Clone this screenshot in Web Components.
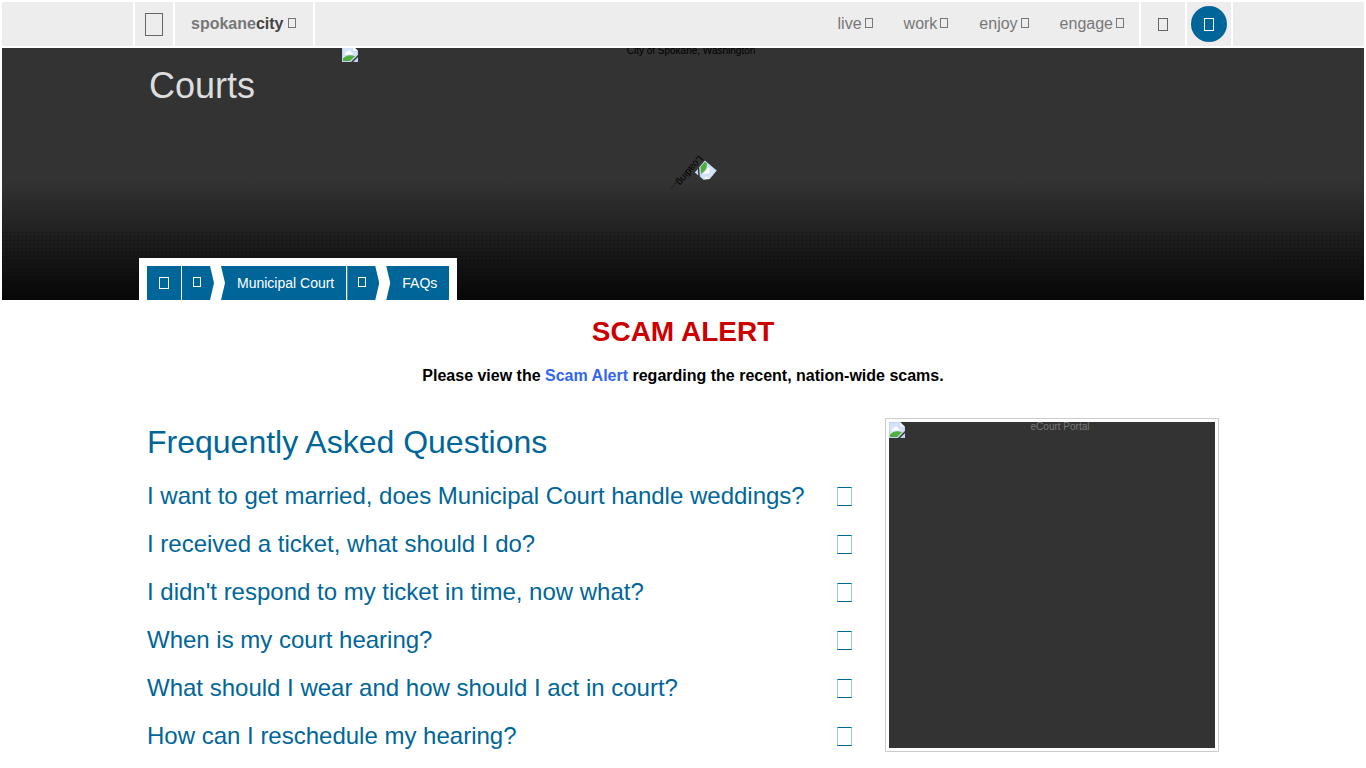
<!DOCTYPE html>
<html lang="en">
<head>
<meta charset="utf-8">
<title>Municipal Court FAQs - City of Spokane, Washington</title>
<style>
  body { margin: 0; background: #fff; font-family: "Liberation Sans", Arial, sans-serif; font-size: 16px; color: #000; overflow-x: hidden; }
</style>
</head>
<body>
<city-page></city-page>
<script>
function define(name, html) {
  const template = document.createElement('template');
  template.innerHTML = html;
  customElements.define(name, class extends HTMLElement {
    constructor() {
      super();
      this.attachShadow({ mode: 'open' }).append(template.content.cloneNode(true));
    }
  });
}

/* Empty glyph box; size comes from --w and --h, colour from the text. */
define('glyph-box', `
<style>
  :host { display: block; flex: none; box-sizing: border-box; width: var(--w, 8px); height: var(--h, 10px); border: 1px solid currentColor; }
</style>`);

define('missing-image', `
<style>
  :host { display: block; width: 16px; height: 16px; flex: none; }
  svg { display: block; }
</style>
<svg width="16" height="16" viewBox="0 0 16 16" aria-hidden="true">
  <path d="M0 0H11L16 5V9L9 16H0Z" fill="#c3d3ef"/>
  <path d="M1 1H10.500V5.500H15V8.500L8 15H1Z" fill="#d3e3fa"/>
  <path d="M3 8C3 6.500 4 6 5 6C6 4 9 4.500 9 6.500C11 6.500 11 8 10 8.500H3Z" fill="#fff"/>
  <path d="M1 15V12.500C4 9.500 7 9 10 9.500L13 10L8 15Z" fill="#4fae3c"/>
  <path d="M11 0V5H16Z" fill="#f4f6fa"/>
  <path d="M16 11V16H11Z" fill="#c3d3ef"/>
</svg>`);

define('nav-item', `
<style>
  :host { display: block; }
  a { display: flex; align-items: center; gap: 3px; height: 100%; padding: 0 15px 0 16px; color: #777; text-decoration: none; line-height: 20px; }
  glyph-box { margin-bottom: 2px; --w: 8px; --h: 10px; }
</style>
<a href="#"><span><slot></slot></span><glyph-box></glyph-box></a>`);

define('site-header', `
<style>
  :host { display: block; background: #ededed; }
  .bar { display: flex; box-sizing: border-box; max-width: 1100px; height: 44px; margin: 0 auto; border: solid #fff; border-width: 0 2px; }
  a, button { display: flex; align-items: center; justify-content: center; text-decoration: none; color: #666; }
  .home { width: 38px; border-right: 2px solid #fff; --w: 18px; --h: 23px; }
  .brand { gap: 4px; padding: 0 17px 0 16px; border-right: 2px solid #fff; font-weight: bold; color: #777; line-height: 20px; }
  .brand b { color: #444; }
  .brand glyph-box { margin-bottom: 2px; }
  nav { display: flex; margin-left: auto; }
  button { padding: 0; border: 0; background: none; width: 44px; --w: 10px; --h: 13px; font: inherit; }
  .cell { display: flex; align-items: center; justify-content: center; width: 44px; border-left: 2px solid #fff; }
  .round { width: 36px; height: 36px; border-radius: 50%; background: #069; color: #fff; }
</style>
<div class="bar">
  <a class="home" href="#" aria-label="Home"><glyph-box></glyph-box></a>
  <a class="brand" href="#"><span>spokane<b>city</b></span><glyph-box></glyph-box></a>
  <nav>
    <nav-item>live</nav-item><nav-item>work</nav-item><nav-item>enjoy</nav-item><nav-item>engage</nav-item>
  </nav>
  <div class="cell"><button aria-label="Search"><glyph-box></glyph-box></button></div>
  <div class="cell"><button class="round" aria-label="Account"><glyph-box></glyph-box></button></div>
</div>`);

define('bread-crumbs', `
<style>
  :host { display: flex; width: fit-content; padding: 8px 8px 0; background: #fff; }
  a { display: flex; align-items: center; justify-content: center; box-sizing: border-box; height: 34px; background: #069; color: #fff; font-size: 14px; text-decoration: none; }
  .home { width: 34px; --w: 10px; --h: 12px; }
  .next { width: 32px; margin-left: 1px; padding: 0 2px 2px 0; clip-path: polygon(0 0, calc(100% - 4px) 0, 100% 50%, calc(100% - 4px) 100%, 0 100%); }
  .page { margin-left: 7px; padding: 0 12px 0 16px; clip-path: polygon(0 0, 100% 0, 100% 100%, 0 100%, 4px 50%); }
</style>
<a class="home" href="#" aria-label="Home"><glyph-box></glyph-box></a>
<a class="next" href="#" aria-label="More"><glyph-box></glyph-box></a>
<a class="page" href="#">Municipal Court</a>
<a class="next" href="#" aria-label="More"><glyph-box></glyph-box></a>
<a class="page" href="#">FAQs</a>`);

define('page-hero', `
<style>
  :host { display: block; position: relative; height: 252px; margin-top: 2px; background: linear-gradient(transparent 132px, #000 272px), #333; overflow: hidden; }
  .mesh { position: absolute; inset: 184px 0 0; background: repeating-linear-gradient(90deg, #0002 0 1px, transparent 1px 4px), repeating-linear-gradient(#0002 0 1px, transparent 1px 4px); }
  .banner { position: absolute; top: -2px; left: 50%; width: 684px; margin-left: -341px; font-size: 10px; line-height: 12px; text-align: center; }
  .banner missing-image { position: absolute; left: 0; top: 0; }
  .banner span { display: block; padding-left: 14px; margin-top: -1px; }
  .loading { position: absolute; left: 50%; top: 118px; margin-left: -12px; width: 44px; font-size: 10px; line-height: 10px; transform: rotate(130deg); }
  .front { position: relative; display: flex; flex-direction: column; justify-content: space-between; box-sizing: border-box; max-width: 1100px; height: 100%; margin: 0 auto; padding: 17px 6px 0; }
  h1 { margin: 0; padding-left: 10px; font-weight: normal; font-size: 36px; line-height: 42px; color: #ddd; }
</style>
<div class="mesh"></div>
<div class="banner"><missing-image></missing-image><span>City of Spokane, Washington</span></div>
<div class="loading"><missing-image></missing-image>Loading...</div>
<div class="front"><h1>Courts</h1><bread-crumbs></bread-crumbs></div>`);

define('scam-alert', `
<style>
  :host { display: block; text-align: center; padding: 15px 14px 0; }
  h2 { margin: 0; font-size: 28px; line-height: 34px; color: #c00; }
  p { margin: 17px 0 0; font-weight: bold; line-height: 20px; }
  a { color: #36e; text-decoration: none; }
</style>
<h2>SCAM ALERT</h2>
<p>Please view the <a href="#">Scam Alert</a> regarding the recent, nation-wide scams.</p>`);

define('faq-item', `
<style>
  :host { display: block; }
  button { display: flex; justify-content: space-between; align-items: center; width: 100%; padding: 0 1px 0 0; border: 0; background: none; font: inherit; font-size: 24px; line-height: 48px; color: #069; text-align: left; --w: 15px; --h: 19px; }
  glyph-box { border-color: #069 #9cc; }
</style>
<button aria-expanded="false"><slot></slot><glyph-box></glyph-box></button>`);

define('faq-list', `
<style>
  :host { display: block; flex: 1; min-width: 0; }
  h2 { margin: 0 0 6px; font-weight: normal; font-size: 32px; line-height: 48px; color: #069; }
</style>
<h2>Frequently Asked Questions</h2>
<slot></slot>`);

define('portal-card', `
<style>
  :host { display: block; flex: 0 0 334px; box-sizing: border-box; border: 1px solid #ccc; padding: 3px; }
  a { display: block; position: relative; aspect-ratio: 1; background: #333; color: #777; font-size: 10px; line-height: 10px; text-align: center; text-decoration: none; }
  missing-image { position: absolute; left: 0; top: 0; }
  span { display: block; padding-left: 16px; }
</style>
<a href="#"><missing-image></missing-image><span><slot></slot></span></a>`);

define('city-page', `
<style>
  :host { display: block; padding: 2px 2px 0; }
  main { display: flex; align-items: flex-start; gap: 32px; box-sizing: border-box; max-width: 1100px; margin: 32px auto 0; padding: 0 14px; }
</style>
<site-header></site-header>
<page-hero></page-hero>
<scam-alert></scam-alert>
<main>
  <faq-list>
    <faq-item>I want to get married, does Municipal Court handle weddings?</faq-item>
    <faq-item>I received a ticket, what should I do?</faq-item>
    <faq-item>I didn't respond to my ticket in time, now what?</faq-item>
    <faq-item>When is my court hearing?</faq-item>
    <faq-item>What should I wear and how should I act in court?</faq-item>
    <faq-item>How can I reschedule my hearing?</faq-item>
  </faq-list>
  <portal-card>eCourt Portal</portal-card>
</main>`);
</script>
</body>
</html>
